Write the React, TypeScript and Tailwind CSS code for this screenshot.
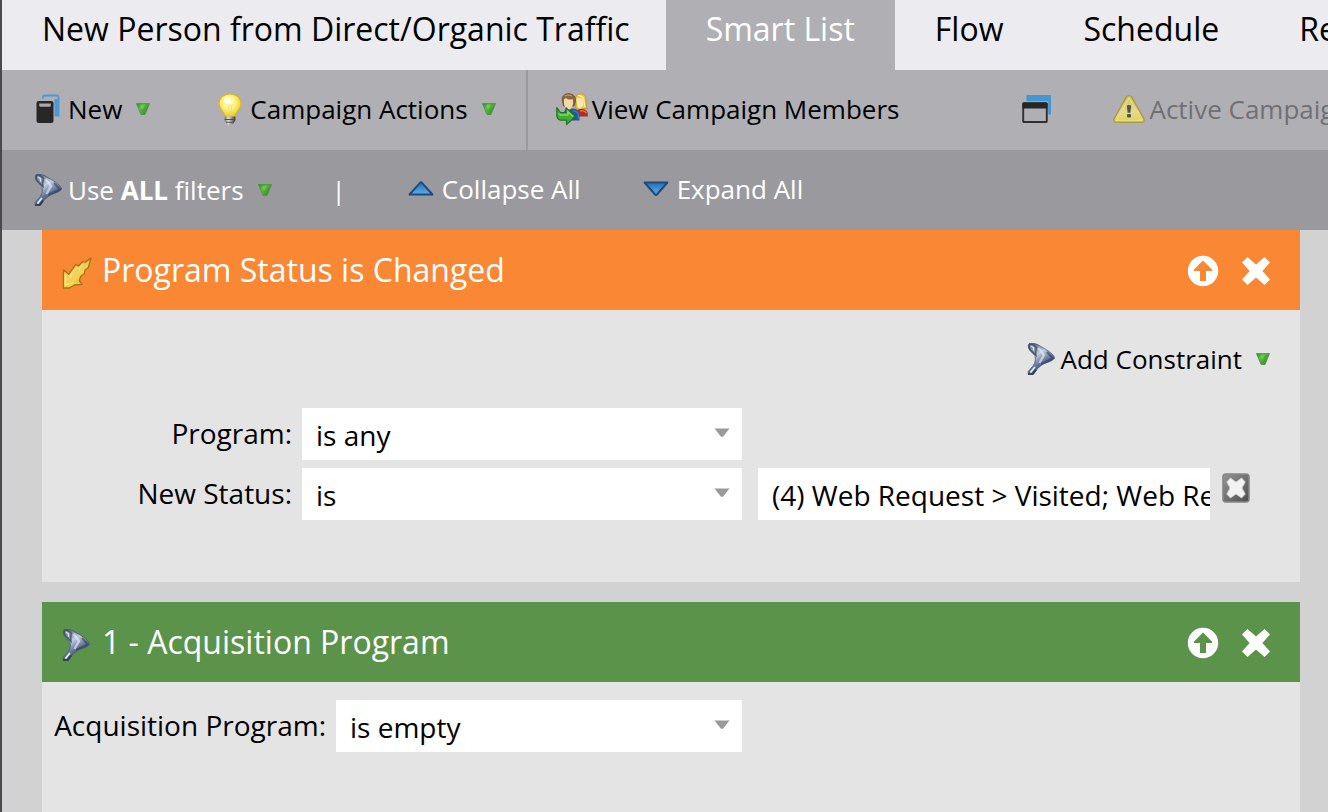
import type { ReactNode } from "react";

type IconProps = { className?: string };

function MenuArrow() {
  return (
    <svg viewBox="0 0 14 12" className="h-3 w-3.5 shrink-0" aria-hidden="true">
      <defs>
        <linearGradient id="menuArrow" x1="0" y1="0" x2="1" y2="0.6">
          <stop offset="0" stopColor="#2c7c2c" />
          <stop offset="0.4" stopColor="#62bd45" />
          <stop offset="1" stopColor="#2f8a2c" />
        </linearGradient>
      </defs>
      <path d="M0.5 0.5H13.5L9 11.5H5Z" fill="url(#menuArrow)" stroke="#4a9440" strokeWidth="0.8" />
      <path d="M4 2.5H9L6 6.5Z" fill="#7ddc52" opacity="0.6" />
    </svg>
  );
}

function FunnelIcon({ className = "" }: IconProps) {
  return (
    <svg viewBox="0 0 28 32" className={`h-8 w-7 shrink-0 ${className}`} aria-hidden="true">
      <defs>
        <linearGradient id="funnel" x1="0.3" y1="0" x2="0.8" y2="1">
          <stop offset="0" stopColor="#5d6d89" />
          <stop offset="0.3" stopColor="#c3cede" />
          <stop offset="0.52" stopColor="#7485a5" />
          <stop offset="0.75" stopColor="#35466a" />
          <stop offset="1" stopColor="#5c6a82" />
        </linearGradient>
      </defs>
      <path
        d="M2 0.8C6 -0.4 10 0.8 13 3C19 6.5 25 9.5 27.6 14.5C27 17 22 19.2 17.5 20.4C13.5 22.5 10 25.5 8.6 28.5L6 31.5H1.2V28.5L5.5 23.5C8.5 20 8.8 16 7.8 12.5L3.2 7.8C1.2 5.5 0.6 2.6 2 0.8Z"
        fill="url(#funnel)"
        stroke="#4b5a76"
        strokeWidth="0.8"
      />
      <path
        d="M2.6 1.2C5 1 7.4 2 9.2 4.2C8.8 7.2 8.6 10 9 12.5L3.8 7.4C2.2 5.4 1.8 3 2.6 1.2Z"
        fill="#8491a6"
        stroke="#465269"
        strokeWidth="1.3"
      />
      <path d="M4 3.2L6.4 4.6L6.6 7.6" fill="none" stroke="#dde3ea" strokeWidth="1.2" />
      <path d="M11.5 5L17 12L12.5 20" fill="none" stroke="#edf2f8" strokeWidth="2.4" opacity="0.6" />
      <path d="M14 21L26 15.5L20 9" fill="none" stroke="#2e3f66" strokeWidth="2" opacity="0.6" />
      <path d="M8 24L3.4 29.6" stroke="#e4e8ee" strokeWidth="1.8" />
      <path d="M1.2 31H6L9 26.5" fill="none" stroke="#303b4e" strokeWidth="1.6" />
    </svg>
  );
}

function NewIcon() {
  return (
    <svg viewBox="0 0 24 30" className="h-[30px] w-6 shrink-0" aria-hidden="true">
      <path d="M7 4.5V3Q7 1.5 8.5 1.5H21Q22.5 1.5 22.5 3V21.5H19" fill="none" stroke="#4a9ad3" strokeWidth="1.8" />
      <path d="M18.5 5H23V22H18.5Z" fill="#4a9ad3" />
      <rect x="0.5" y="7" width="17" height="22" rx="2.2" fill="#272727" />
      <path d="M3.2 9.6H14.8V11.6Q14.8 12.8 13.6 12.8H4.4Q3.2 12.8 3.2 11.6Z" fill="#aaa9ad" />
    </svg>
  );
}

function BulbIcon() {
  return (
    <svg viewBox="0 0 24 32" className="h-8 w-6 shrink-0" aria-hidden="true">
      <defs>
        <radialGradient id="bulb" cx="0.45" cy="0.38" r="0.6">
          <stop offset="0" stopColor="#fffef0" />
          <stop offset="0.5" stopColor="#fdf27c" />
          <stop offset="1" stopColor="#ecca24" />
        </radialGradient>
        <linearGradient id="bulbBase" x1="0" y1="0" x2="1" y2="0">
          <stop offset="0" stopColor="#77777a" />
          <stop offset="0.35" stopColor="#dedee0" />
          <stop offset="1" stopColor="#3c3c3e" />
        </linearGradient>
      </defs>
      <path
        d="M12 0.8C5.5 0.8 0.9 5 0.9 10.8C0.9 15 4 17.3 5.8 20.3C6.8 22 6.3 23.4 8 24H16C17.7 23.4 17.2 22 18.2 20.3C20 17.3 23.1 15 23.1 10.8C23.1 5 18.5 0.8 12 0.8Z"
        fill="url(#bulb)"
        stroke="#d6b43a"
        strokeWidth="1.2"
      />
      <path d="M8.6 11L10.5 13L12 11.4L13.5 13L15.4 11M10.5 13L10.8 21M13.5 13L13.2 21" fill="none" stroke="#e9cf58" strokeWidth="0.9" opacity="0.6" />
      <ellipse cx="9" cy="6.8" rx="3.2" ry="2.5" fill="#fffff2" opacity="0.8" />
      <path d="M6.6 23.5H17.4V27.6Q17.4 28.8 16 29.2L14.8 31.5H9.2L8 29.2Q6.6 28.8 6.6 27.6Z" fill="url(#bulbBase)" />
      <path d="M6.6 26.5H17.4M8 29.3H16" stroke="#505052" strokeWidth="1" />
    </svg>
  );
}

function MembersIcon() {
  return (
    <svg viewBox="0 0 32 32" className="h-8 w-8 shrink-0" aria-hidden="true">
      <path d="M19.5 5C20 1.5 23 0.4 26 1C29.5 1.8 30.2 5 29.8 8L31 15.5L20 16Z" fill="#ebc839" stroke="#b99725" strokeWidth="0.8" />
      <path d="M20.5 5.5Q24 3.5 27 7V12Q25.5 16.5 22 15Z" fill="#fbe6b8" />
      <path d="M22 2.5Q27 2 28 8L28.6 14" fill="none" stroke="#fff1a0" strokeWidth="1.4" />
      <path d="M19 23.5C19 18.5 21 16 25 16C29.5 16 31.8 18 31.8 21V23.5Z" fill="#b32b23" />
      <path d="M24 18Q28.5 16.8 30.5 20" fill="none" stroke="#dd6b57" strokeWidth="1.5" />
      <path d="M8 26V19Q9 15.5 14 15.5Q22.5 15 23.5 20V27.5H16Z" fill="#27559a" />
      <path d="M17 18Q21 17.5 22.4 21V26" fill="none" stroke="#3c76b8" strokeWidth="1.6" />
      <path d="M6.2 6.5C6.4 2 9.5 0.5 13 0.7C17.5 0.9 20 4 19.3 9L18 13H7.5Z" fill="#896642" stroke="#65472d" strokeWidth="0.8" />
      <path d="M8 6.2Q9.5 4.5 11.5 6Q15 7 17 6V11Q15.5 16.8 12.5 16.8Q9.2 16.5 8 11Z" fill="#f6d8a3" />
      <path d="M8.5 3Q12 1.2 16 3" fill="none" stroke="#bc986e" strokeWidth="1.2" />
      <path d="M0.8 14.5L4.5 19.5H10V14.8L19.5 23.4L10.5 31.5V27.2H4.5Q0.8 26 0.8 22Z" fill="#41ad35" stroke="#1c7424" strokeWidth="1.2" strokeLinejoin="round" />
      <path d="M2.5 20.5L4.5 22H11.8V18.6L16.8 23.5" fill="none" stroke="#7edc5e" strokeWidth="1.4" />
    </svg>
  );
}

function WindowsIcon() {
  return (
    <svg viewBox="0 0 30 30" className="h-[30px] w-[30px] shrink-0" aria-hidden="true">
      <path d="M4.5 1H29V20.5H26.2V7.2H4.5Z" fill="#4398d2" />
      <rect x="1.2" y="9.2" width="23.6" height="18.8" rx="0.8" fill="#b0afb4" stroke="#302f31" strokeWidth="1.9" />
      <path d="M0.5 9.5Q0.5 8.5 1.5 8.5H24.5Q25.5 8.5 25.5 9.5V14.6H0.5Z" fill="#262627" />
    </svg>
  );
}

function WarningIcon() {
  return (
    <svg viewBox="0 0 32 30" className="h-[30px] w-8 shrink-0" aria-hidden="true">
      <defs>
        <linearGradient id="warn" x1="0" y1="0" x2="0" y2="1">
          <stop offset="0" stopColor="#cdbd63" />
          <stop offset="0.6" stopColor="#e2da91" />
          <stop offset="1" stopColor="#ded05b" />
        </linearGradient>
      </defs>
      <path d="M13.4 2.8Q16 0 18.6 2.8L31 25Q31.8 28 29 28.2H3Q0.2 28 1 25Z" fill="url(#warn)" stroke="#ae9d48" strokeWidth="1.5" />
      <path d="M16 4L28.5 26.3H3.5Z" fill="none" stroke="#e8df83" strokeWidth="1.2" />
      <path d="M13.8 11.5Q16 10.3 18.2 11.5L17.4 18.8H14.6Z" fill="#55544c" />
      <rect x="14" y="20" width="4" height="3.4" rx="1" fill="#55544c" />
    </svg>
  );
}

function BlueTriangle({ down = false }: { down?: boolean }) {
  return (
    <svg viewBox="0 0 26 16" className="h-4 w-[26px] shrink-0" aria-hidden="true">
      <defs>
        <linearGradient id="blueUp" x1="0" y1="0" x2="0" y2="1">
          <stop offset="0" stopColor="#2a6eb0" />
          <stop offset="1" stopColor="#5ab0ec" />
        </linearGradient>
      </defs>
      <path
        d={down ? "M1.5 1.5H24.5L13.5 14H12.5Z" : "M12.5 1.3H13.5L24.5 13.5H1.5Z"}
        fill="url(#blueUp)"
        stroke="#1e4a7c"
        strokeWidth="1.9"
        strokeLinejoin="round"
      />
    </svg>
  );
}

function TriggerIcon() {
  return (
    <svg viewBox="0 0 30 32" className="h-8 w-[30px] shrink-0" aria-hidden="true">
      <defs>
        <linearGradient id="bolt" x1="0" y1="0" x2="0.5" y2="1">
          <stop offset="0" stopColor="#d0951d" />
          <stop offset="0.6" stopColor="#f3d55c" />
          <stop offset="1" stopColor="#ecc23a" />
        </linearGradient>
      </defs>
      <path
        d="M29 1L26.3 10.5L23 13L22.4 16.5L18.8 19.2L17.2 23.5L20 27.4L12.5 28L7.5 31H1.4V12.8L6.8 17.3L13.6 7.4L16.7 8.8L20.6 4.6L23.3 5.1Z"
        fill="url(#bolt)"
        stroke="#a77416"
        strokeWidth="1.3"
        strokeLinejoin="round"
      />
      <path d="M3.5 17V28L12 25.5M7.5 20L14.5 10.5L17 12L21 7" fill="none" stroke="#ffeea0" strokeWidth="1.6" opacity="0.6" />
    </svg>
  );
}

function MoveUpIcon() {
  return (
    <svg viewBox="0 0 32 32" className="size-8" aria-hidden="true">
      <path
        fillRule="evenodd"
        fill="white"
        d="M16 0.8A15.2 15.2 0 1 1 16 31.2A15.2 15.2 0 1 1 16 0.8ZM16 5.5L6.8 14.8V16H13V26H19V16H25.2V14.8Z"
      />
    </svg>
  );
}

function RemoveIcon() {
  return (
    <svg viewBox="0 0 30 30" className="size-[30px]" aria-hidden="true">
      <path d="M6.5 1L15 8.6L23.5 1L29 6.5L21.4 15L29 23.5L23.5 29L15 21.4L6.5 29L1 23.5L8.6 15L1 6.5Z" fill="white" />
    </svg>
  );
}

function ClearIcon() {
  return (
    <svg viewBox="0 0 28 30" className="h-[30px] w-7" aria-hidden="true">
      <defs>
        <linearGradient id="clear" x1="0" y1="0" x2="1" y2="1">
          <stop offset="0" stopColor="#959595" />
          <stop offset="1" stopColor="#4e4e4e" />
        </linearGradient>
      </defs>
      <rect x="1" y="1" width="26" height="28" rx="3" fill="url(#clear)" stroke="#868686" strokeWidth="1.6" />
      <path
        d="M8.5 5L14 9L19.5 5L23.3 8.9L20 15L23.3 21.1L19.5 25L14 21L8.5 25L4.7 21.1L8 15L4.7 8.9Z"
        fill="#f3f3f3"
        stroke="#cacaca"
        strokeWidth="0.8"
      />
    </svg>
  );
}

type SelectFieldProps = { id: string; label: string; value: string; labelClass: string; children?: ReactNode };

function SelectField({ id, label, value, labelClass, children }: SelectFieldProps) {
  return (
    <div className="flex items-start text-[28px]">
      <div className="flex w-[700px] shrink-0 items-start gap-2.5">
        <label htmlFor={id} className={`shrink-0 whitespace-nowrap text-right leading-[50px] ${labelClass}`}>
          {label}
        </label>
        <div className="relative min-w-0 flex-1">
          <select id={id} className="block h-[52px] w-full appearance-none rounded-none bg-white pt-0.5 pl-3.5 text-black outline-none">
            <option>{value}</option>
          </select>
          <svg viewBox="0 0 16 10" className="pointer-events-none absolute top-5 right-3 h-2.5 w-4" aria-hidden="true">
            <path d="M0.5 0.5H15.5L9 8.8H7Z" fill="#999" />
          </svg>
        </div>
      </div>
      {children}
    </div>
  );
}

type RuleCardProps = { title: string; icon: ReactNode; headerClass: string; className?: string; children: ReactNode };

function RuleCard({ title, icon, headerClass, className = "", children }: RuleCardProps) {
  return (
    <section className={`flex flex-col bg-[#e4e4e4] ${className}`}>
      <header className={`flex h-20 shrink-0 items-center pr-7 pl-5 text-white ${headerClass}`}>
        <div className="flex w-10 items-center pt-1.5">{icon}</div>
        <h2 className="flex-1 text-[32px] leading-10">{title}</h2>
        <div className="flex items-center gap-[22px] pt-0.5 pr-px">
          <button type="button" aria-label="Move up">
            <MoveUpIcon />
          </button>
          <button type="button" aria-label="Remove">
            <RemoveIcon />
          </button>
        </div>
      </header>
      {children}
    </section>
  );
}

const toolButton = "flex shrink-0 items-center whitespace-nowrap";

export default function App() {
  return (
    <div className="flex h-screen flex-col overflow-hidden border-l-2 border-[#49484d] bg-[#d2d2d2] font-['Open_Sans','Noto_Sans',sans-serif] text-[26px] text-black">
      <nav className="flex h-[70px] shrink-0 overflow-hidden bg-[#ecebf0] text-[32px] leading-[58px]">
        <a href="#campaign" className="shrink-0 pr-9 pl-10 whitespace-nowrap">New Person from Direct/Organic Traffic</a>
        <a href="#smart-list" className="shrink-0 bg-[#b0afb4] px-10 whitespace-nowrap text-white">Smart List</a>
        <a href="#flow" className="shrink-0 px-10">Flow</a>
        <a href="#schedule" className="shrink-0 px-10">Schedule</a>
        <a href="#results" className="shrink-0 px-10">Results</a>
      </nav>

      <div className="flex h-20 shrink-0 overflow-hidden bg-[#b0afb4] pb-0.5">
        <div className="-mb-0.5 flex shrink-0 items-center gap-[68px] border-r-2 border-[#9a999e] pr-[30px] pb-0.5 pl-[34px]">
          <button type="button" className={toolButton}>
            <NewIcon />
            <span className="mr-3.5 ml-2">New</span>
            <MenuArrow />
          </button>
          <button type="button" className={toolButton}>
            <BulbIcon />
            <span className="mr-3.5 ml-2">Campaign Actions</span>
            <MenuArrow />
          </button>
        </div>
        <button type="button" className={`${toolButton} ml-7`}>
          <MembersIcon />
          <span className="ml-1">View Campaign Members</span>
        </button>
        <button type="button" aria-label="Open in new window" className="ml-[123px] shrink-0">
          <WindowsIcon />
        </button>
        <button type="button" disabled className={`${toolButton} ml-[61px] text-[#707074]`}>
          <WarningIcon />
          <span className="ml-1">Active Campaign</span>
        </button>
      </div>

      <div className="flex h-20 shrink-0 items-center overflow-hidden bg-[#9a999e] pl-8 text-white">
        <button type="button" className={toolButton}>
          <FunnelIcon />
          <span className="mr-3.5 ml-1.5">Use <b>ALL</b> filters</span>
          <MenuArrow />
        </button>
        <span className="mr-[62px] ml-[60px]">|</span>
        <button type="button" className={`${toolButton} pb-0.5`}>
          <BlueTriangle />
          <span className="ml-2">Collapse All</span>
        </button>
        <button type="button" className={`${toolButton} ml-[62px] pb-0.5`}>
          <BlueTriangle down />
          <span className="ml-2">Expand All</span>
        </button>
      </div>

      <main className="flex min-h-0 flex-1 flex-col gap-5 overflow-hidden pr-7 pl-10">
        <RuleCard title="Program Status is Changed" icon={<TriggerIcon />} headerClass="bg-[#fa8734]" className="shrink-0 pb-[62px]">
          <div className="flex h-[98px] items-center justify-end pr-[30px]">
            <button type="button" className={toolButton}>
              <FunnelIcon />
              <span className="mr-3.5 ml-1.5">Add Constraint</span>
              <MenuArrow />
            </button>
          </div>
          <div className="flex flex-col gap-2">
            <SelectField id="program" label="Program:" value="is any" labelClass="w-[250px]" />
            <SelectField id="new-status" label="New Status:" value="is" labelClass="w-[250px]">
              <input
                aria-label="New Status values"
                defaultValue="(4) Web Request > Visited; Web Request > Engaged"
                className="ml-4 h-[52px] w-[452px] min-w-0 bg-white pt-0.5 pl-3.5 outline-none"
              />
              <button type="button" aria-label="Clear New Status" className="mt-[5px] ml-3 shrink-0">
                <ClearIcon />
              </button>
            </SelectField>
          </div>
        </RuleCard>

        <RuleCard title="1 - Acquisition Program" icon={<FunnelIcon />} headerClass="bg-[#5b934b]" className="flex-1">
          <div className="pt-[18px]">
            <SelectField id="acquisition-program" label="Acquisition Program:" value="is empty" labelClass="w-[284px]" />
          </div>
        </RuleCard>
      </main>
    </div>
  );
}
